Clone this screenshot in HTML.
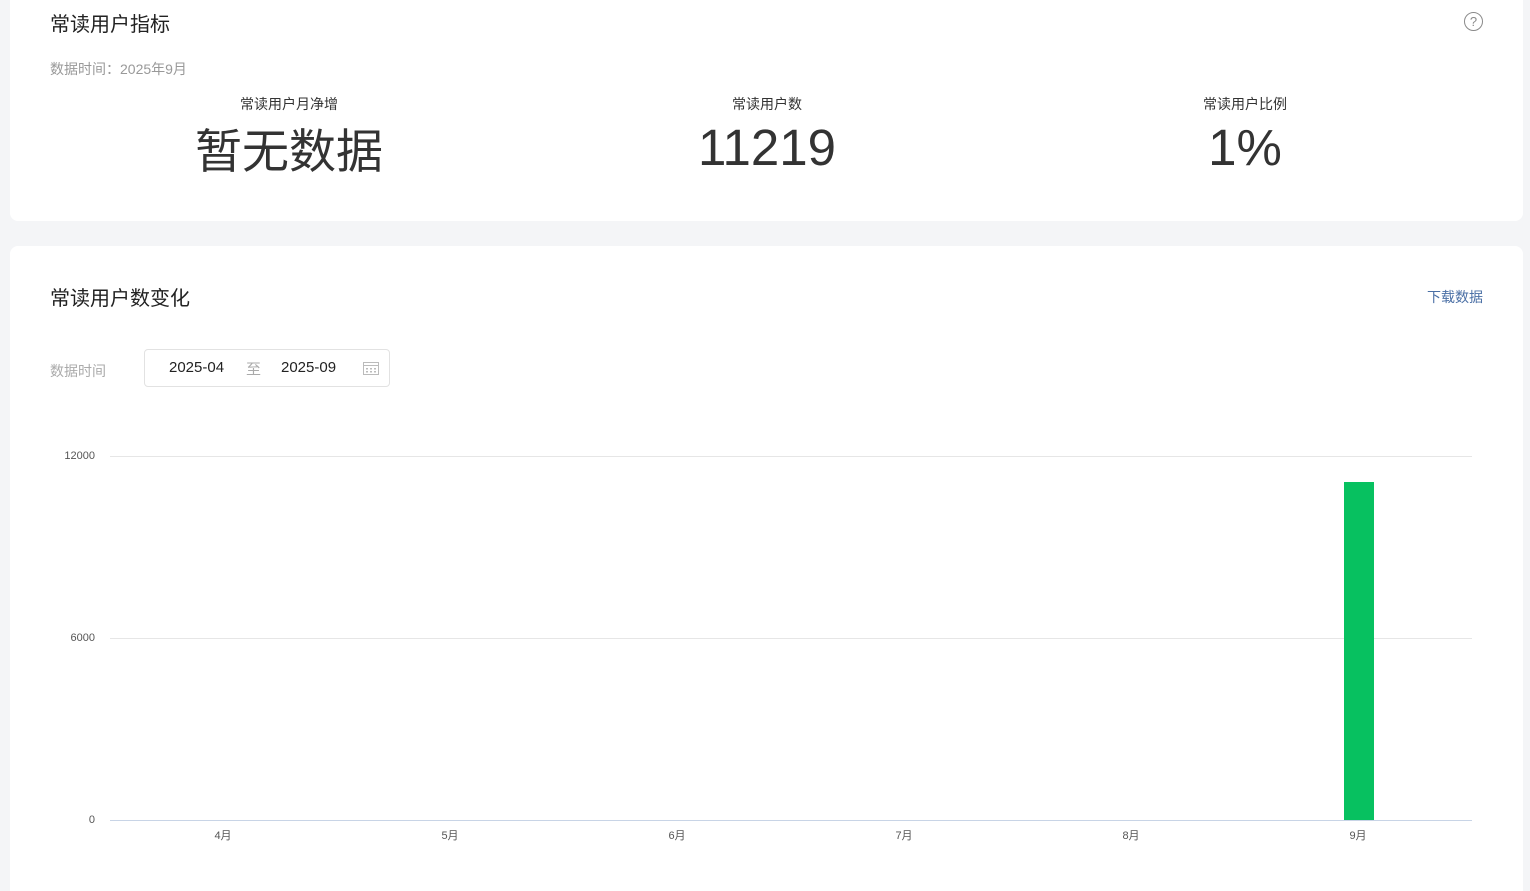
<!DOCTYPE html>
<html><head><meta charset="utf-8"><style>
*{margin:0;padding:0;box-sizing:border-box}
html,body{width:1530px;height:891px;overflow:hidden}
body{background:#f4f5f7;font-family:"Liberation Sans","Noto Sans CJK SC",sans-serif;position:relative;color:#333}
.card{position:absolute;left:10px;width:1513px;background:#fff;border-radius:8px}
.abs{position:absolute;white-space:nowrap}
.col{position:absolute;top:95px;width:478px;text-align:center}
.col .l{font-size:14px;color:#333;line-height:19px}
.col .v{font-size:51px;color:#333;line-height:60px;margin-top:4px}
.col .v.cj{font-size:47px;margin-top:8px}
.grid{position:absolute;left:110px;width:1362px;height:1px;background:#e6e6e6}
.yl{position:absolute;font-size:11px;color:#555;right:1435px;text-align:right}
.xl{position:absolute;top:827px;font-size:11px;color:#555;width:40px;text-align:center}
</style></head><body>
<div class="card" style="top:-10px;height:231px"></div>
<div class="abs" style="left:50px;top:8px;font-size:20px;color:#222">常读用户指标</div>
<div class="abs" style="left:1464px;top:12px;width:19px;height:19px;border:1.3px solid #8a8a8a;border-radius:50%;text-align:center;font-size:13px;line-height:17px;color:#8a8a8a">?</div>
<div class="abs" style="left:50px;top:59px;font-size:14px;color:#999">数据时间：2025年9月</div>
<div class="col" style="left:50px"><div class="l">常读用户月净增</div><div class="v cj">暂无数据</div></div>
<div class="col" style="left:528px"><div class="l">常读用户数</div><div class="v">11219</div></div>
<div class="col" style="left:1006px"><div class="l">常读用户比例</div><div class="v">1%</div></div>

<div class="card" style="top:246px;height:645px;border-bottom-left-radius:0;border-bottom-right-radius:0"></div>
<div class="abs" style="left:50px;top:282px;font-size:20px;color:#222">常读用户数变化</div>
<div class="abs" style="left:1427px;top:287px;font-size:14px;color:#4a6fa5">下载数据</div>
<div class="abs" style="left:50px;top:361px;font-size:14px;color:#aaa">数据时间</div>
<div class="abs" style="left:144px;top:349px;width:246px;height:38px;border:1px solid #e2e2e2;border-radius:4px"></div>
<div class="abs" style="left:169px;top:359px;font-size:15px;color:#222">2025-04</div>
<div class="abs" style="left:246px;top:358px;font-size:15px;color:#aaa">至</div>
<div class="abs" style="left:281px;top:359px;font-size:15px;color:#222">2025-09</div>
<svg class="abs" style="left:363px;top:361px" width="16" height="14" viewBox="0 0 16 14"><rect x="0.5" y="1.5" width="15" height="12" fill="none" stroke="#bbb"/><line x1="0.5" y1="4.5" x2="15.5" y2="4.5" stroke="#bbb"/><g fill="#bbb"><rect x="3" y="7" width="2" height="1.5"/><rect x="7" y="7" width="2" height="1.5"/><rect x="11" y="7" width="2" height="1.5"/><rect x="3" y="10" width="2" height="1.5"/><rect x="7" y="10" width="2" height="1.5"/><rect x="11" y="10" width="2" height="1.5"/></g></svg>

<div class="grid" style="top:456px"></div>
<div class="grid" style="top:638px"></div>
<div class="grid" style="top:820px;background:#c8d4e6"></div>
<div class="yl" style="top:450px">12000</div>
<div class="yl" style="top:632px">6000</div>
<div class="yl" style="top:814px">0</div>
<div class="abs" style="left:1344px;top:482px;width:30px;height:338px;background:#07c160"></div>
<div class="xl" style="left:203px">4月</div>
<div class="xl" style="left:430px">5月</div>
<div class="xl" style="left:657px">6月</div>
<div class="xl" style="left:884px">7月</div>
<div class="xl" style="left:1111px">8月</div>
<div class="xl" style="left:1338px">9月</div>
</body></html>
